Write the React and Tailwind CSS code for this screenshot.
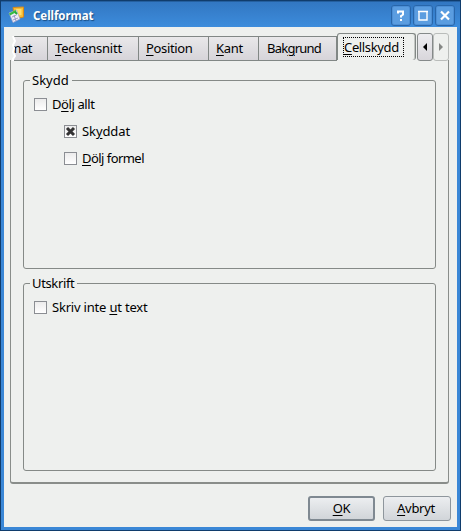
import React from "react";

const U = ({ children }) => (
  <span className="underline decoration-1 underline-offset-2">{children}</span>
);

function TitleButton({ children }) {
  return (
    <div className="flex h-[21px] w-[20px] items-center justify-center rounded-[3px] border border-[#2866aa] bg-[#5b9de0] shadow-[inset_0_0_0_1px_#4c8fd6]">
      <svg width="18" height="19" viewBox="0 0 18 19" fill="none" className="shrink-0">{children}</svg>
    </div>
  );
}

function Tab({ className, children }) {
  return (
    <div className={`flex h-[25px] shrink-0 items-center border-t border-r border-b border-[#818785] bg-linear-to-b from-[#e9e8ea] to-[#d6d4d9] whitespace-nowrap ${className}`}>
      {children}
    </div>
  );
}

function Check({ checked, className, children }) {
  return (
    <div className={`flex h-[13px] items-center ${className}`}>
      <span className="flex h-[13px] w-[13px] items-center justify-center border border-[#8b8e93] bg-linear-to-b from-[#ececec] to-white">
        {checked && (
          <svg width="11" height="11" viewBox="0 0 11 11" className="shrink-0">
            <path d="M2 2L9 9M9 2L2 9" stroke="#333" strokeWidth="3" />
          </svg>
        )}
      </span>
      <span className="ml-[5px] whitespace-nowrap">{children}</span>
    </div>
  );
}

function Group({ title, className, children }) {
  return (
    <section className={`ml-[12px] w-[413px] rounded-[3px] border border-[#858a87] ${className}`}>
      <div className="-mt-[9px] ml-[6px] flex h-[17px] w-max items-center bg-[#eef0ee] pr-[3px] pl-[2px]">{title}</div>
      {children}
    </section>
  );
}

export default function App() {
  return (
    <div className="flex h-[531px] w-[461px] flex-col overflow-hidden border border-[#103c6c] bg-[#3a87d6] font-['Noto_Sans','Open_Sans',sans-serif] text-[13px] leading-[17px] text-black">
      <header className="-mb-px flex h-[27px] shrink-0 items-center border-t border-[#245f9f] bg-linear-to-b from-[#3277c2] to-[#3d8ddd] pr-[5px] pl-[7px]">
        <svg width="18" height="18" viewBox="0 0 18 18" className="-mt-px">
          <path d="M5 1.5L15.5 1L15.5 11L7 13Z" fill="#f5bd35" stroke="#d98b1b" />
          <path d="M8 3L13.5 3L13.5 9L8 10Z" fill="#ffdf70" />
          <path d="M1 7L8.5 4L12 13L5 16.5Z" fill="#eeeef7" stroke="#a9a3ca" strokeWidth=".7" />
          <path d="M1.5 8.5L8 5" stroke="#37bc43" strokeWidth="2.2" />
          <path d="M4 11L8.5 9M5 14L10 12M6 9L8 15" stroke="#8d87bd" strokeWidth=".8" />
          <path d="M7 6L9 8" stroke="#28a835" strokeWidth="2" />
        </svg>
        <span className="mt-px ml-[7px] text-[11.5px] font-bold tracking-[-0.05px] text-white [text-shadow:1px_1px_1px_#174c82]">Cellformat</span>
        <div className="ml-auto flex gap-[2px]">
          <TitleButton>
            <path d="M6 7.5V5.5H11V8.5L9 10V11.5M9 13V15" stroke="white" strokeWidth="2" />
          </TitleButton>
          <TitleButton>
            <path d="M5 5.5H13V14H5ZM4 5.5H14" stroke="white" strokeWidth="1.4" />
          </TitleButton>
          <TitleButton>
            <path d="M5 5.5L13 13.5M13 5.5L5 13.5" stroke="white" strokeWidth="2.2" />
          </TitleButton>
        </div>
      </header>
      <main className="mx-[3px] h-[500px] shrink-0 bg-[#eef0ee] pt-[6px]">
        <div className="flex h-[28px] pl-[8px]">
          <div className="mt-[3px] flex">
            <div className="relative flex overflow-hidden">
              <Tab className="w-[36px] justify-end pr-[15px] tracking-[-0.5px]">mat</Tab>
              <svg className="absolute top-0 left-0" width="5" height="25" viewBox="0 0 5 25">
                <path d="M0 0H2L1 3L3 6L1 9L2 13L1 17L3 20L1 23L1 25H0Z" fill="#eef0ee" />
                <path d="M1 0L2 3L3 5L1 9L2 12L1 16L3 20L1 23L1 25" fill="none" stroke="white" strokeWidth="2" />
              </svg>
            </div>
            <Tab className="w-[91px] pl-[7px] tracking-[-0.2px]"><span><U>T</U>eckensnitt</span></Tab>
            <Tab className="w-[70px] pl-[7px] tracking-[-0.35px]"><span><U>P</U>osition</span></Tab>
            <Tab className="w-[50px] pl-[7px] tracking-[-0.3px]"><span><U>K</U>ant</span></Tab>
            <Tab className="w-[78px] pl-[8px] tracking-[-0.75px]"><span>Bak<U>g</U>rund</span></Tab>
          </div>
          <div className="flex h-[27px] w-[79px] shrink-0 items-start rounded-t-[3px] rounded-br-[3px] border-x border-t border-[#818785] pt-[3px] pl-[5px] shadow-[inset_-1px_0_0_#c3c6c3]">
            <span className="flex h-[20px] w-[61px] items-center border border-dotted border-black tracking-[-0.35px]"><span><U>C</U>ellskydd</span></span>
          </div>
          <div className="ml-px flex h-[28px] w-[16px] shrink-0 items-center justify-center rounded-[3px] border border-[#858a8a] bg-linear-to-b from-[#ededf0] to-[#d8d6db]">
            <svg width="6" height="8"><path d="M5 0V8L1 4Z" fill="black" /></svg>
          </div>
          <div className="flex h-[28px] w-[16px] shrink-0 items-center justify-center rounded-[3px] border border-[#b9bcba]">
            <svg width="6" height="8"><path d="M1 0V8L5 4Z" fill="#858785" /></svg>
          </div>
        </div>
        <div className="-mt-px ml-[6px] h-[424px] w-[439px] rounded-b-[3px] border-x border-b-2 border-[#898d8a] pt-[20px]">
          <Group title="Skydd" className="h-[189px]">
            <Check className="mt-[9px] ml-[10px]"><span className="tracking-[-0.4px]">D<U>ö</U>lj allt</span></Check>
            <Check checked className="mt-[14px] ml-[40px]"><span className="tracking-[-0.1px]">Sk<U>y</U>ddat</span></Check>
            <Check className="mt-[14px] ml-[40px]"><span className="tracking-[-0.55px]"><U>D</U>ölj formel</span></Check>
          </Group>
          <Group title={<span className="tracking-[-0.35px]">Utskrift</span>} className="mt-[14px] h-[188px]">
            <Check className="mt-[9px] ml-[10px]"><span className="tracking-[-0.2px]">Skriv inte <U>u</U>t text</span></Check>
          </Group>
        </div>
        <div className="mt-[12px] mr-[6px] flex justify-end gap-[8px]">
          <button className="h-[25px] w-[67px] rounded-[3px] border-2 border-[#7f8991] bg-linear-to-b from-[#eceef0] to-[#d1d5d9] tracking-[-0.3px]"><U>O</U>K</button>
          <button className="h-[25px] w-[68px] rounded-[3px] border border-[#8e969c] bg-linear-to-b from-[#eceef0] to-[#d1d5d9] pr-[2px] tracking-[-0.3px]"><U>A</U>vbryt</button>
        </div>
      </main>
    </div>
  );
}
